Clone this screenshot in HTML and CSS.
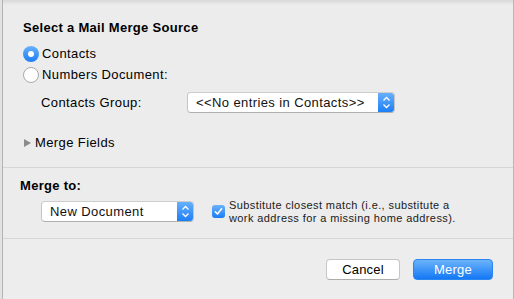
FILE: index.html
```html
<!DOCTYPE html>
<html lang="en">
<head>
  <meta charset="UTF-8" />
  <title>Mail Merge</title>
  <link rel="stylesheet" href="styles.css">
</head>
<body>
  <div class="dialog">

    <div class="section source">
      <h2 class="title">Select a Mail Merge Source</h2>

      <label class="radio-row">
        <span class="radio checked"></span>
        <span>Contacts</span>
      </label>
      <label class="radio-row">
        <span class="radio"></span>
        <span>Numbers Document:</span>
      </label>

      <div class="group-row">
        <span class="group-label">Contacts Group:</span>
        <div class="popup popup-wide">
          <span class="popup-text">&lt;&lt;No entries in Contacts&gt;&gt;</span>
          <span class="stepper">
            <svg width="17" height="21" viewBox="0 0 17 21"><path d="M5.5 8.5 L8.5 5.5 L11.5 8.5 M5.5 12.5 L8.5 15.5 L11.5 12.5" fill="none" stroke="#fff" stroke-width="1.3"/></svg>
          </span>
        </div>
      </div>

      <div class="disclosure">
        <span class="triangle"></span>
        <span>Merge Fields</span>
      </div>
    </div>

    <div class="section target">
      <h2 class="title">Merge to:</h2>
      <div class="target-row">
        <div class="popup popup-doc">
          <span class="popup-text">New Document</span>
          <span class="stepper">
            <svg width="17" height="21" viewBox="0 0 17 21"><path d="M5.5 8.5 L8.5 5.5 L11.5 8.5 M5.5 12.5 L8.5 15.5 L11.5 12.5" fill="none" stroke="#fff" stroke-width="1.3"/></svg>
          </span>
        </div>
        <span class="checkbox">
          <svg width="13" height="13" viewBox="0 0 13 13"><path d="M3.3 6.8 L5.5 9 L9.6 3.8" fill="none" stroke="#fff" stroke-width="1.6" stroke-linecap="round" stroke-linejoin="round"/></svg>
        </span>
        <p class="check-text">Substitute closest match (i.e., substitute a<br>work address for a missing home address).</p>
      </div>
    </div>

    <div class="section actions">
      <button class="btn btn-cancel">Cancel</button>
      <button class="btn btn-merge">Merge</button>
    </div>

  </div>
</body>
</html>
```

FILE: styles.css
```css
* {
  margin: 0;
  padding: 0;
  box-sizing: border-box;
  font-family: "Liberation Sans", Arial, sans-serif;
}

body {
  width: 514px;
  height: 299px;
  background: #e2e2e2;
  overflow: hidden;
}

.dialog {
  margin-left: 2px;
  width: 512px;
  height: 299px;
  border-left: 1px solid #b3b3b3;
  border-right: 1px solid #b8b8b8;
  background: linear-gradient(to bottom, #d8d8d8 0, #ececec 5px);
  display: flex;
  flex-direction: column;
  color: #000;
  font-size: 13px;
  line-height: 16px;
  letter-spacing: 0.4px;
}

.title {
  font-size: 13px;
  font-weight: bold;
  line-height: 16px;
  letter-spacing: 0.3px;
}

/* Source section */
.source {
  padding: 20px 0 16px 20px;
  border-bottom: 1px solid #d6d6d6;
}

.radio-row {
  display: flex;
  align-items: center;
  height: 21px;
}

.source .title + .radio-row {
  margin-top: 7px;
}

.radio {
  width: 16px;
  height: 16px;
  border-radius: 50%;
  border: 1px solid #a9a9a9;
  background: #fff;
  margin-right: 3px;
  display: flex;
  align-items: center;
  justify-content: center;
}

.radio.checked {
  border: none;
  background: linear-gradient(to bottom, #69b1fb, #1b7df5);
}

.radio.checked::after {
  content: "";
  width: 6px;
  height: 6px;
  border-radius: 50%;
  background: #fff;
}

.group-row {
  display: flex;
  align-items: center;
  margin-top: 7px;
  height: 21px;
}

.group-label {
  width: 164px;
  padding-left: 18px;
  flex: none;
}

.popup {
  display: flex;
  align-items: center;
  height: 21px;
  background: #fff;
  border: 1px solid #c4c4c4;
  border-top-color: #cdcdcd;
  border-bottom-color: #b0b0b0;
  border-radius: 4px;
  overflow: hidden;
}

.popup-wide {
  width: 208px;
}

.popup-doc {
  width: 153px;
}

.popup-text {
  flex: 1;
  padding-left: 8px;
  color: #111;
  white-space: nowrap;
}

.stepper {
  width: 17px;
  height: 21px;
  margin: -1px -1px -1px 0;
  background: linear-gradient(to bottom, #6ab2fb, #1a7cf5);
  display: flex;
}

.disclosure {
  display: flex;
  align-items: center;
  margin-top: 22px;
  height: 16px;
}

.triangle {
  width: 0;
  height: 0;
  margin-left: 1px;
  margin-right: 4px;
  border-top: 4px solid transparent;
  border-bottom: 4px solid transparent;
  border-left: 7px solid #8b8b8b;
}

/* Target section */
.target {
  padding: 10px 0 16px 17px;
  border-bottom: 1px solid #d6d6d6;
}

.target-row {
  display: flex;
  align-items: center;
  height: 21px;
  margin-top: 7px;
  padding-left: 21px;
}

.checkbox {
  width: 13px;
  height: 13px;
  margin-left: 18px;
  margin-right: 4px;
  border-radius: 3px;
  background: linear-gradient(to bottom, #6ab2fb, #1a7cf5);
  display: flex;
  flex: none;
}

.check-text {
  font-size: 11px;
  line-height: 13px;
  color: #1a1a1a;
  white-space: nowrap;
}

/* Buttons */
.actions {
  flex: 1;
  display: flex;
  justify-content: flex-end;
  align-items: flex-start;
  gap: 13px;
  padding: 20px 20px 0 0;
  background: #ededed;
}

.btn {
  height: 21px;
  border-radius: 4px;
  font-size: 13px;
  line-height: 19px;
  letter-spacing: 0.2px;
}

.btn-cancel {
  width: 74px;
  background: #fff;
  color: #000;
  border: 1px solid #c6c6c6;
  border-bottom-color: #acacac;
}

.btn-merge {
  width: 80px;
  color: #fff;
  border: 1px solid #2b86f2;
  background: linear-gradient(to bottom, #6cb3fa, #1378f5);
}
```
